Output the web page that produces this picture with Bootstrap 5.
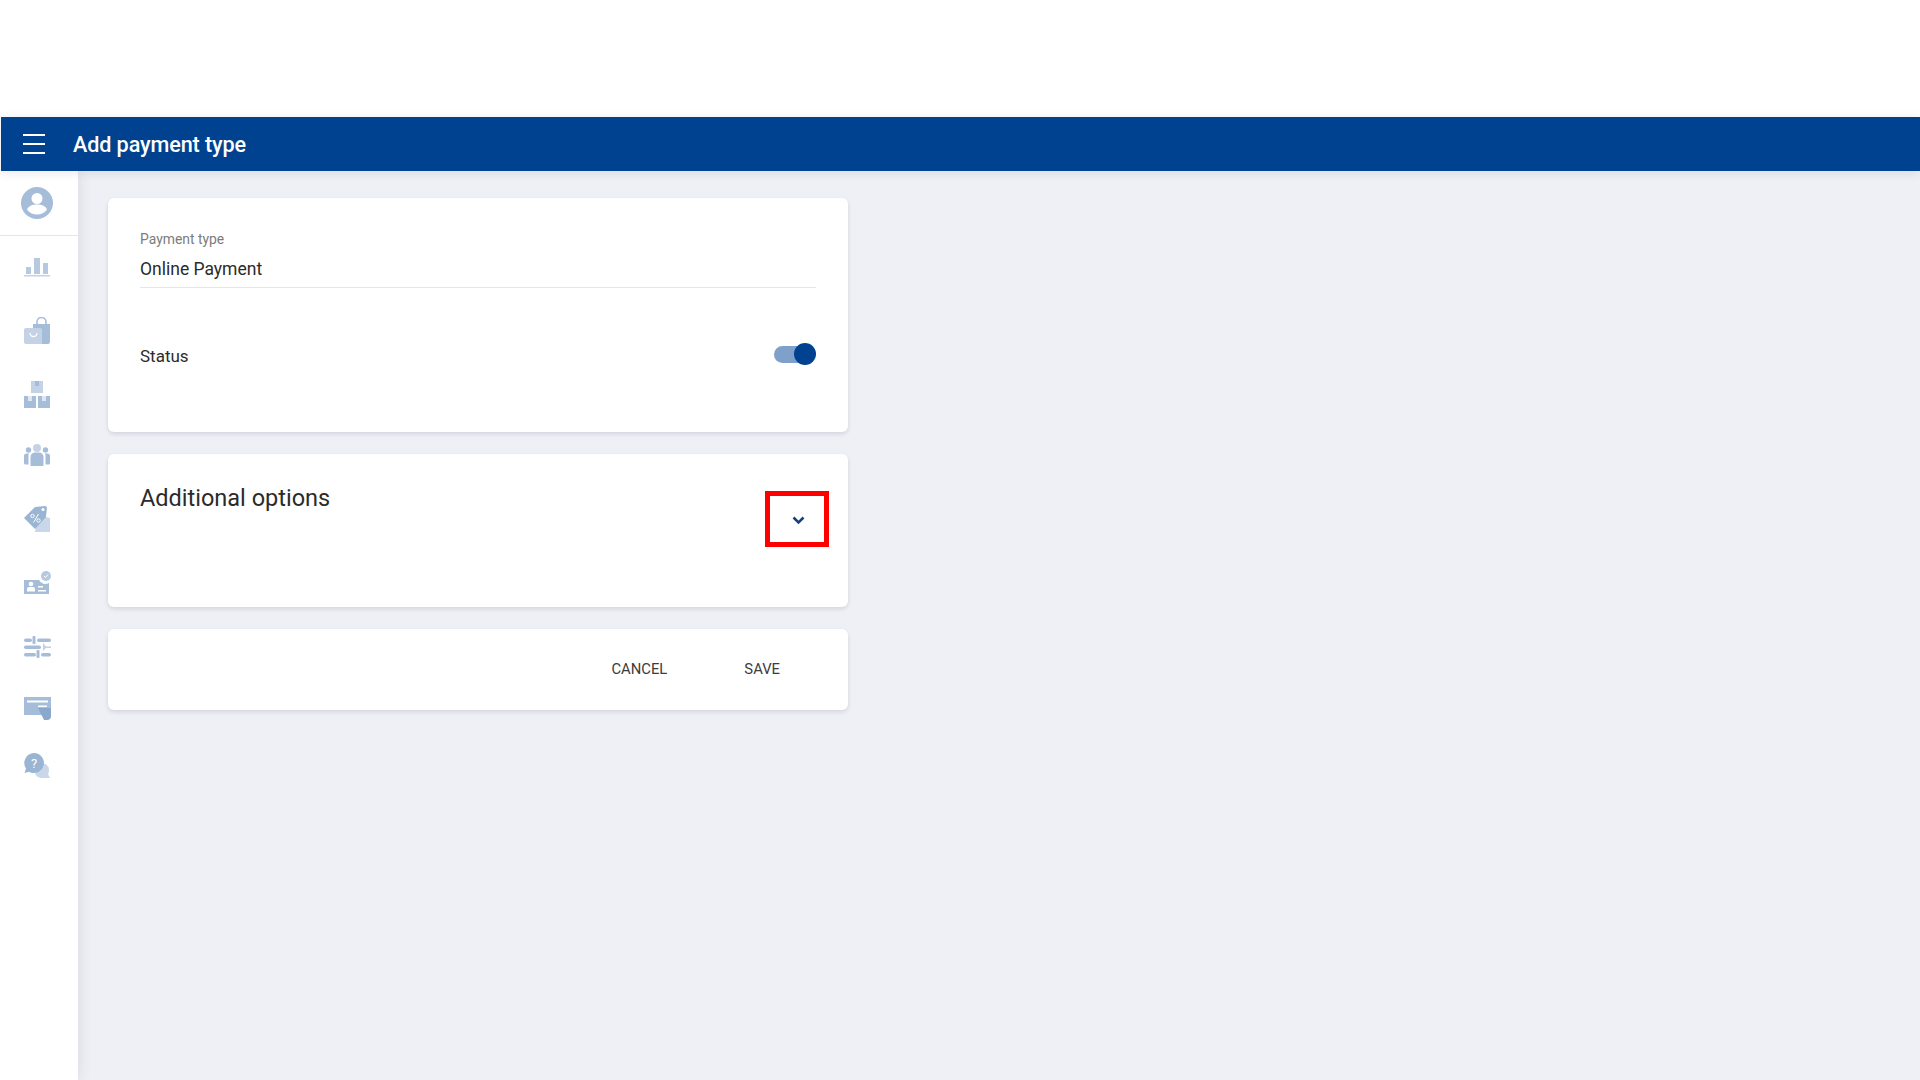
<!DOCTYPE html>
<html lang="en">
<head>
    <meta charset="UTF-8">
    <meta name="viewport" content="width=device-width, initial-scale=1.0">
    <title>Add payment type</title>
    <link rel="stylesheet" href="https://cdn.jsdelivr.net/npm/bootstrap@5.3.0/dist/css/bootstrap.min.css">
    <style>
        body {
            background-color: #fff;
            font-family: Roboto, "Liberation Sans", sans-serif;
            color: #2b2b2b;
        }

        .top-gap { height: 117px; }

        .app-bar {
            height: 54px;
            margin-left: 1px;
            background-color: #00428f;
            color: #fff;
            position: relative;
            z-index: 2;
            box-shadow: 0 2px 10px rgba(40, 50, 80, .1);
        }

        .menu-btn {
            width: 22px;
            margin-left: 22px;
            margin-right: 28px;
        }

        .app-title {
            font-size: 21.6px;
            font-weight: 500;
            margin: 1px 0 0;
            letter-spacing: -.1px;
        }

        .app-body {
            min-height: 909px;
            background-color: #eef0f5;
        }

        .side-rail {
            width: 78px;
            background-color: #fff;
            box-shadow: 0 0 14px rgba(40, 50, 80, .12);
        }

        .rail-user {
            height: 65px;
            padding-right: 4px;
            border-bottom: 1px solid #e4e6ea;
        }

        .rail-item {
            height: 63px;
            padding-right: 4px;
        }

        /* the icons in the rail are not evenly spaced */
        .rail-item:nth-child(2) { margin-top: -1px; }
        .rail-item:nth-child(3) { margin-top: 1px; }
        .rail-item:nth-child(4) { margin-top: 1px; }
        .rail-item:nth-child(5) { margin-top: -3px; }
        .rail-item:nth-child(6) { margin-top: 1px; }
        .rail-item:nth-child(7) { margin-top: 1px; }
        .rail-item:nth-child(8) { margin-top: 1px; }
        .rail-item:nth-child(9) { margin-top: -1px; }
        .rail-item:nth-child(10) { margin-top: -5px; }

        .page-col {
            width: 740px;
            margin: 27px 0 0 30px;
        }

        .panel {
            border: 0;
            border-radius: 6px;
            box-shadow: 0 2px 4px rgba(40, 50, 80, .14);
            margin-bottom: 22px;
        }

        .panel-main { height: 234px; padding: 32px; }
        .panel-extra { height: 153px; padding: 32px; }
        .panel-actions { height: 81px; padding: 0 32px; }

        .field-label {
            font-size: 13.9px;
            line-height: 18px;
            color: #7c7c7c;
        }

        .field-value {
            font-size: 17.5px;
            line-height: 24px;
            margin-top: 9px;
            padding-bottom: 6px;
            border-bottom: 1px solid #e6e6e6;
        }

        .status-row { margin-top: 56px; font-size: 17px; }

        .toggle-track {
            display: block;
            width: 36px;
            height: 17px;
            margin-right: 6px;
            margin-bottom: 5px;
            border-radius: 9px;
            background-color: #7fa0c9;
            position: relative;
        }

        .toggle-knob {
            position: absolute;
            right: -6px;
            top: -3px;
            width: 22px;
            height: 22px;
            border-radius: 50%;
            background-color: #00428f;
        }

        .extra-title {
            font-size: 23.5px;
            font-weight: 400;
            line-height: 28px;
            margin: -2px 0 0;
        }

        .expand-mark {
            position: absolute;
            left: 657px;
            top: 37px;
            width: 64px;
            height: 56px;
            border: 5px solid #f00;
        }

        .expand-mark svg {
            position: absolute;
            left: 22px;
            top: 20px;
        }

        .plain-btn {
            font-size: 14.8px;
            color: #3c3c3c;
            padding: 0;
            border: 0;
            background: none;
            text-transform: uppercase;
        }

        .save-btn { margin-left: 77px; margin-right: 36px; }
    </style>
</head>
<body>

<div class="top-gap"></div>

<!-- Header -->
<div class="app-bar d-flex align-items-center">
    <svg class="menu-btn" width="22" height="20" viewBox="0 0 22 20" fill="#fff">
        <rect y="0" width="22" height="2"></rect>
        <rect y="9" width="22" height="2"></rect>
        <rect y="18" width="22" height="2"></rect>
    </svg>
    <h1 class="app-title">Add payment type</h1>
</div>

<div class="app-body d-flex">
    <!-- Sidebar -->
    <div class="side-rail flex-shrink-0">
        <div class="rail-user d-flex align-items-center justify-content-center">
            <svg width="32" height="32" viewBox="0 0 32 32">
                <circle cx="16" cy="16" r="16" fill="#a6bdd9"></circle>
                <circle cx="16" cy="11.5" r="5.500" fill="#fff"></circle>
                <path d="M6 22.500c2-3.800 5.500-4.900 10-4.900s8 1.100 10 4.900c-2.300 3.200-5.900 5-10 5s-7.700-1.800-10-5z" fill="#fff"></path>
            </svg>
        </div>
        <div class="rail-item d-flex align-items-center justify-content-center">
            <svg width="26" height="20" viewBox="0 0 26 20">
                <rect x="2" y="10" width="5" height="7" fill="#b7c9e0"></rect>
                <rect x="10" y="1" width="6" height="16" fill="#b7c9e0"></rect>
                <rect x="19" y="6" width="5" height="11" fill="#b7c9e0"></rect>
                <rect y="18" width="26" height="1.500" fill="#c3d2e5"></rect>
            </svg>
        </div>
        <div class="rail-item d-flex align-items-center justify-content-center">
            <svg width="26" height="27" viewBox="0 0 26 27">
                <path d="M13 7V5a4.500 4.500 0 0 1 9 0v3" fill="none" stroke="#a6bdd9" stroke-width="1.600"></path>
                <path d="M9 7h17v18a2 2 0 0 1-2 2H9z" fill="#a6bdd9"></path>
                <path d="M2 11h14a2 2 0 0 1 2 2v14H2a2 2 0 0 1-2-2V13a2 2 0 0 1 2-2z" fill="#c3d2e5"></path>
                <path d="M6 16a3.500 3.500 0 0 0 7 0" fill="none" stroke="#fff" stroke-width="1.300"></path>
            </svg>
        </div>
        <div class="rail-item d-flex align-items-center justify-content-center">
            <svg width="26" height="27" viewBox="0 0 26 27">
                <rect x="7" y="0" width="12" height="12" fill="#c3d2e5"></rect>
                <rect x="11" y="0" width="4" height="5" fill="#a6bdd9"></rect>
                <rect x="0" y="15" width="12" height="12" fill="#a6bdd9"></rect>
                <rect x="4" y="15" width="4" height="5" fill="#dfe7f1"></rect>
                <rect x="14" y="15" width="12" height="12" fill="#a6bdd9"></rect>
                <rect x="18" y="15" width="4" height="5" fill="#dfe7f1"></rect>
            </svg>
        </div>
        <div class="rail-item d-flex align-items-center justify-content-center">
            <svg width="26" height="22" viewBox="0 0 26 22">
                <circle cx="13" cy="4" r="4" fill="#c3d2e5"></circle>
                <circle cx="4.500" cy="6" r="2.700" fill="#a6bdd9"></circle>
                <circle cx="21.500" cy="6" r="2.700" fill="#a6bdd9"></circle>
                <path d="M0 12a2.500 2.500 0 0 1 2.500-2.500h2.500a5 5 0 0 0-.5 2v9H1.500A1.500 1.500 0 0 1 0 19z" fill="#a6bdd9"></path>
                <path d="M26 12a2.500 2.500 0 0 0-2.500-2.500H21a5 5 0 0 1 .5 2v9h3a1.500 1.500 0 0 0 1.500-1.500z" fill="#a6bdd9"></path>
                <path d="M6.500 13a4.500 4.500 0 0 1 4.500-4.500h4a4.500 4.500 0 0 1 4.500 4.500v9h-13z" fill="#a6bdd9"></path>
            </svg>
        </div>
        <div class="rail-item d-flex align-items-center justify-content-center">
            <svg width="26" height="27" viewBox="0 0 26 27">
                <path d="M14 10l12 3v14H11z" fill="#c9d7e8"></path>
                <path d="M0 13L11 2l10-1 2 1-1 10L11 24z" fill="#9ab4d3"></path>
                <circle cx="19" cy="4.500" r="1.500" fill="#fff"></circle>
                <circle cx="8.500" cy="11" r="1.700" fill="none" stroke="#fff" stroke-width="1"></circle>
                <circle cx="14.500" cy="15.500" r="1.700" fill="none" stroke="#fff" stroke-width="1"></circle>
                <path d="M14.500 9l-5 8.500" stroke="#fff" stroke-width="1"></path>
            </svg>
        </div>
        <div class="rail-item d-flex align-items-center justify-content-center">
            <svg width="27" height="24" viewBox="0 0 27 24">
                <path d="M0 9h15a7 7 0 0 0 10 3v11H0z" fill="#a6bdd9"></path>
                <circle cx="22" cy="5" r="5" fill="#b7c9e0"></circle>
                <path d="M20 5l1.500 1.500 2.500-3" fill="none" stroke="#fff" stroke-width="1"></path>
                <circle cx="7" cy="13" r="2.300" fill="#fff"></circle>
                <path d="M3 20.500v-2.500a2 2 0 0 1 2-2h4a2 2 0 0 1 2 2v2.500z" fill="#fff"></path>
                <rect x="14" y="15" width="5" height="1.500" fill="#fff"></rect>
                <rect x="14" y="19" width="8" height="1.500" fill="#fff"></rect>
            </svg>
        </div>
        <div class="rail-item d-flex align-items-center justify-content-center">
            <svg width="27" height="22" viewBox="0 0 27 22" fill="#a6bdd9">
                <rect x="0" y="2.500" width="8" height="3.500" rx="1.700"></rect>
                <rect x="8.500" y="0" width="3" height="8" rx="1"></rect>
                <rect x="13" y="2.500" width="14" height="3.500" rx="1.700"></rect>
                <rect x="0" y="9.500" width="17" height="3.500" rx="1.700"></rect>
                <path d="M19 7l3 3.500h5v1.500h-5L19 15z" fill="#c3d2e5"></path>
                <rect x="0" y="17" width="12" height="3.500" rx="1.700"></rect>
                <rect x="12.500" y="14" width="3" height="8" rx="1"></rect>
                <rect x="17" y="17" width="10" height="3.500" rx="1.700"></rect>
            </svg>
        </div>
        <div class="rail-item d-flex align-items-center justify-content-center">
            <svg width="27" height="23" viewBox="0 0 27 23">
                <rect width="27" height="18" fill="#a6bdd9"></rect>
                <rect x="3" y="3.500" width="21" height="2" fill="#fff"></rect>
                <rect x="14" y="8.500" width="9" height="1.500" fill="#fff"></rect>
                <path d="M14 11h13v8a4 4 0 0 1-4 4h-3z" fill="#8aa8cd"></path>
            </svg>
        </div>
        <div class="rail-item d-flex align-items-center justify-content-center">
            <svg width="26" height="27" viewBox="0 0 26 27">
                <path d="M17 11a6 6 0 0 1 8 5.500c0 2-.5 3.500-1 4.500l2 4h-9a8 8 0 0 1-6-4z" fill="#c9d7e8"></path>
                <path d="M10 0a10 10 0 1 1-5 18.700L.5 20 2 15.500A10 10 0 0 1 10 0z" fill="#9ab4d3"></path>
                <text x="10" y="14.500" text-anchor="middle" font-size="13" font-family="Roboto, sans-serif" fill="#fff">?</text>
            </svg>
        </div>
    </div>

    <!-- Form -->
    <div class="page-col">
        <div class="card panel panel-main">
            <div class="field-label">Payment type</div>
            <div class="field-value">Online Payment</div>
            <div class="status-row d-flex justify-content-between align-items-center">
                <span>Status</span>
                <span class="toggle-track"><span class="toggle-knob"></span></span>
            </div>
        </div>

        <div class="card panel panel-extra position-relative">
            <h2 class="extra-title">Additional options</h2>
            <div class="expand-mark">
                <svg width="13" height="9" viewBox="0 0 13 9" fill="none" stroke="#17407f" stroke-width="2.500">
                    <path d="M1.500 1.500l5 5 5-5"></path>
                </svg>
            </div>
        </div>

        <div class="card panel panel-actions flex-row align-items-center justify-content-end">
            <button type="button" class="btn plain-btn">Cancel</button>
            <button type="button" class="btn plain-btn save-btn">Save</button>
        </div>
    </div>
</div>

<script src="https://cdn.jsdelivr.net/npm/bootstrap@5.3.0/dist/js/bootstrap.bundle.min.js"></script>
</body>
</html>
